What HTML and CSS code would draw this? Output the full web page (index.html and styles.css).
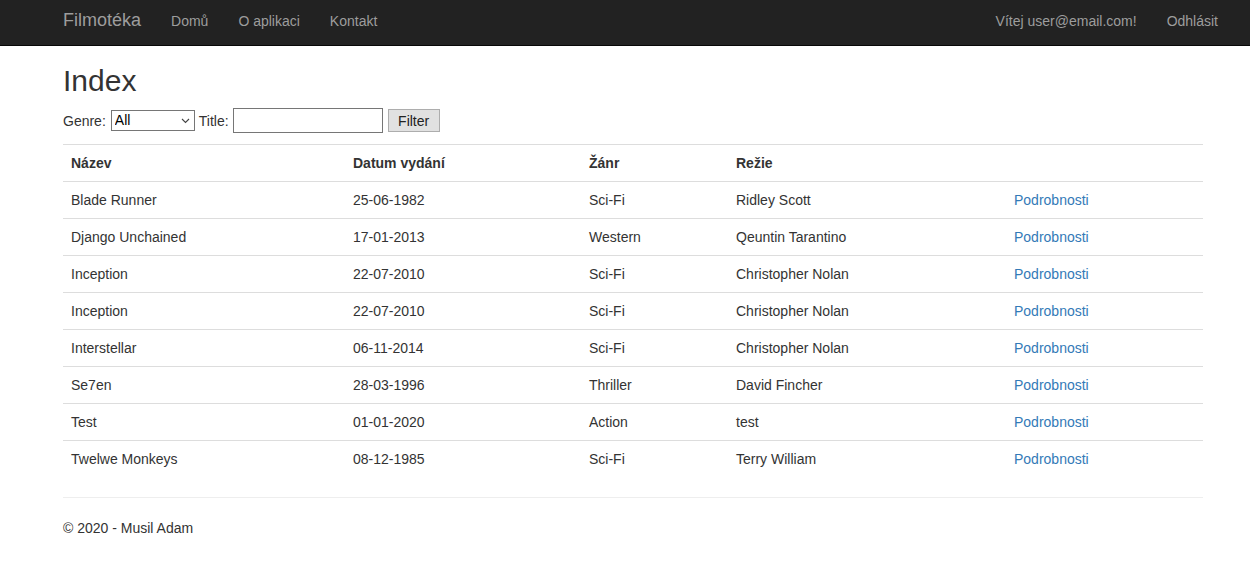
FILE: index.html
```html
<!DOCTYPE html>
<html lang="cs">
<head>
<meta charset="utf-8">
<title>Index - Filmotéka</title>
<link rel="stylesheet" href="styles.css">
</head>
<body>
<nav class="navbar">
  <div class="nav-inner">
    <div class="nav-left">
      <a class="brand" href="#">Filmotéka</a>
      <a class="nav-link" href="#">Domů</a>
      <a class="nav-link" href="#">O aplikaci</a>
      <a class="nav-link" href="#">Kontakt</a>
    </div>
    <div class="nav-right">
      <a class="nav-link" href="#">Vítej user@email.com!</a>
      <a class="nav-link" href="#">Odhlásit</a>
    </div>
  </div>
</nav>
<div class="content">
  <h2 class="title">Index</h2>
  <form class="filter">
    <label class="lbl lbl-genre">Genre:</label>
    <span class="select-wrap">
      <select class="genre-select">
        <option>All</option>
        <option>Sci-Fi</option>
        <option>Western</option>
        <option>Thriller</option>
        <option>Action</option>
      </select>
      <svg class="chev" width="9" height="6" viewBox="0 0 9 6"><path d="M1 1 L4.5 4.5 L8 1" fill="none" stroke="#444" stroke-width="1.1"/></svg>
    </span>
    <label class="lbl">Title:</label>
    <input class="title-input" type="text">
    <button class="filter-btn" type="button">Filter</button>
  </form>
  <table class="movies">
    <thead>
      <tr>
        <th class="c1">Název</th>
        <th class="c2">Datum vydání</th>
        <th class="c3">Žánr</th>
        <th class="c4">Režie</th>
        <th class="c5"></th>
      </tr>
    </thead>
    <tbody>
      <tr><td>Blade Runner</td><td>25-06-1982</td><td>Sci-Fi</td><td>Ridley Scott</td><td><a href="#">Podrobnosti</a></td></tr>
      <tr><td>Django Unchained</td><td>17-01-2013</td><td>Western</td><td>Qeuntin Tarantino</td><td><a href="#">Podrobnosti</a></td></tr>
      <tr><td>Inception</td><td>22-07-2010</td><td>Sci-Fi</td><td>Christopher Nolan</td><td><a href="#">Podrobnosti</a></td></tr>
      <tr><td>Inception</td><td>22-07-2010</td><td>Sci-Fi</td><td>Christopher Nolan</td><td><a href="#">Podrobnosti</a></td></tr>
      <tr><td>Interstellar</td><td>06-11-2014</td><td>Sci-Fi</td><td>Christopher Nolan</td><td><a href="#">Podrobnosti</a></td></tr>
      <tr><td>Se7en</td><td>28-03-1996</td><td>Thriller</td><td>David Fincher</td><td><a href="#">Podrobnosti</a></td></tr>
      <tr><td>Test</td><td>01-01-2020</td><td>Action</td><td>test</td><td><a href="#">Podrobnosti</a></td></tr>
      <tr><td>Twelwe Monkeys</td><td>08-12-1985</td><td>Sci-Fi</td><td>Terry William</td><td><a href="#">Podrobnosti</a></td></tr>
    </tbody>
  </table>
  <hr class="sep">
  <footer class="footer">
    <p>© 2020 - Musil Adam</p>
  </footer>
</div>
</body>
</html>
```
FILE: styles.css
```css
* { box-sizing: border-box; }
html, body {
  margin: 0;
  padding: 0;
  background: #fff;
}
body {
  font-family: "Liberation Sans", Arial, sans-serif;
  font-size: 14px;
  line-height: 20px;
  color: #333;
}
a { color: #337ab7; text-decoration: none; }

.navbar {
  height: 46px;
  background: #222;
  border-bottom: 1px solid #080808;
}
.nav-inner {
  width: 1200px;
  margin-left: 33px;
  padding: 0 15px;
  display: flex;
  justify-content: space-between;
  align-items: flex-start;
}
.nav-left, .nav-right {
  display: flex;
  align-items: flex-start;
}
.nav-right { margin-right: -15px; }
.brand {
  color: #9d9d9d;
  font-size: 18px;
  line-height: 20px;
  padding: 10px 15px;
}
.nav-link {
  color: #9d9d9d;
  font-size: 14px;
  line-height: 20px;
  padding: 11px 15px;
}

.content {
  width: 1140px;
  margin-left: 63px;
}
.title {
  font-size: 30px;
  font-weight: 500;
  line-height: 33px;
  margin: 18px 0 10px;
}
.filter {
  display: flex;
  align-items: center;
  height: 27px;
  margin: 0 0 10px;
}
.lbl {
  margin-right: 4px;
}
.lbl-genre { margin-right: 5px; }
.select-wrap {
  position: relative;
  display: inline-flex;
  margin-right: 4px;
}
.genre-select {
  appearance: none;
  -webkit-appearance: none;
  width: 84px;
  height: 21px;
  margin: 0;
  font-family: "Liberation Sans", Arial, sans-serif;
  font-size: 14px;
  line-height: 19px;
  color: #000;
  border: 1px solid #767676;
  border-radius: 0;
  background: #fff;
  padding: 0 0 0 3px;
}
.chev {
  position: absolute;
  left: 70px;
  top: 8px;
  pointer-events: none;
}
.title-input {
  width: 150px;
  height: 25px;
  margin: 0 5px 0 0;
  border: 1px solid #767676;
  border-radius: 0;
  padding: 1px 2px;
  font-size: 13.33px;
  font-family: "Liberation Sans", Arial, sans-serif;
}
.filter-btn {
  width: 52px;
  height: 23px;
  padding: 0;
  font-family: "Liberation Sans", Arial, sans-serif;
  font-size: 14px;
  color: #222;
  background: #e1e1e1;
  border: 1px solid #adadad;
  border-radius: 0;
}

.movies {
  width: 1140px;
  table-layout: fixed;
  border-collapse: collapse;
  border-spacing: 0;
  margin-bottom: 20px;
}
.movies th, .movies td {
  text-align: left;
  padding: 8px;
  line-height: 20px;
  vertical-align: top;
  border-top: 1px solid #ddd;
}
.movies th { font-weight: bold; }
.movies thead th { border-bottom: 1px solid #ddd; border-top: 1px solid #ddd; }
.movies tbody tr:first-child td { border-top: 0; }
.c1 { width: 282px; }
.c2 { width: 236px; }
.c3 { width: 147px; }
.c4 { width: 278px; }
.c5 { width: 197px; }

.sep {
  border: 0;
  border-top: 1px solid #eee;
  margin: 0 0 20px;
}
.footer p { margin: 0 0 10px; }
```
